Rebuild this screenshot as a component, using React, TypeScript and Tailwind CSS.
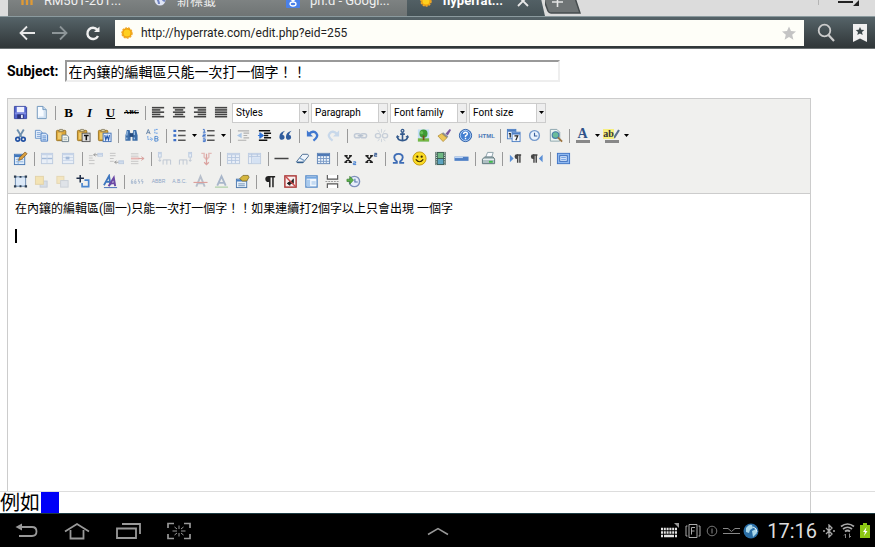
import React from "react";

type Glyph = React.ReactNode;

const NAVY = "#2f5c9e";

const clipboard = (
  <>
    <rect x="1.5" y="2.5" width="10" height="11" rx="1" fill="#d9a437" stroke="#9a7424" />
    <path d="M4 3.5 5 1.5h3l1 2z" fill="#f3e7b5" stroke="#77705a" strokeWidth="0.8" />
    <path d="M3 5h4v7H3z" fill="#f0cb6b" />
  </>
);

const lines = (rows: [number, number][]) => (
  <>
    {rows.map(([x, w], i) => (
      <rect key={i} x={x} y={2 + i * 2.4} width={w} height="1.7" fill="#444" />
    ))}
  </>
);

const smallTable = (x: number, y: number, w: number, h: number) => (
  <>
    <rect x={x} y={y} width={w} height={h} fill="#e9eff7" stroke="#bccade" />
    <rect x={x} y={y} width={w} height="2" fill="#c6d4e8" />
  </>
);

const glyphs: Record<string, Glyph> = {
  Save: (
    <>
      <path d="M1.500 1.500h12l1 1v12h-13z" fill="#5263cf" stroke="#3a47a0" />
      <rect x="4" y="2" width="8" height="6" fill="#eef1ff" />
      <path d="M2 8h12v2H2z" fill="#7e8be2" />
      <rect x="4.500" y="10" width="7" height="4.500" fill="#2c3479" />
      <rect x="8.500" y="10.500" width="2" height="3.500" fill="#e4e7fa" />
    </>
  ),
  "New document": (
    <>
      <path d="M3.500 1.500h6l3.500 3.500v9.500h-9.500z" fill="#f7fbff" stroke="#6c93bb" />
      <path d="M9.500 1.500v3.500H13" fill="#c8dcf0" stroke="#6c93bb" />
      <path d="M11 6v7H5" fill="none" stroke="#d2e2f3" strokeWidth="1.500" />
    </>
  ),
  "Align left": lines([[1, 13], [1, 9], [1, 13], [1, 9], [1, 13]]),
  "Align center": lines([[1, 13], [3, 9], [1, 13], [3, 9], [1, 13]]),
  "Align right": lines([[1, 13], [5, 9], [1, 13], [5, 9], [1, 13]]),
  "Align full": lines([[1, 13], [1, 13], [1, 13], [1, 13], [1, 13]]),
  Cut: (
    <>
      <path d="M4.500 1.500 9.500 10M11.500 1.500 6.500 10" stroke="#6d8fae" strokeWidth="2" fill="none" />
      <circle cx="5" cy="12" r="2" fill="none" stroke="#2352a4" strokeWidth="1.800" />
      <circle cx="11" cy="12" r="2" fill="none" stroke="#2352a4" strokeWidth="1.800" />
    </>
  ),
  Copy: (
    <>
      <path d="M1.500 2.500h5l2 2v6.500h-7z" fill="#e8f1fc" stroke="#6c95c9" />
      <path d="M3 5h4M3 7h4M3 9h4" stroke="#7fa4d6" />
      <path d="M7.500 5.500h5l2 2v6.500h-7z" fill="#dbe9fb" stroke="#4a7cc0" />
      <path d="M9 8.500h4M9 10.500h4M9 12.500h4" stroke="#5b8bcc" />
    </>
  ),
  Paste: (
    <>
      {clipboard}
      <path d="M7.500 7.500h5l2 2v5h-7z" fill="#f5f8f0" stroke="#6b7d8c" />
      <path d="M9 10.500h4M9 12.500h4" stroke="#9fb0b8" />
    </>
  ),
  "Paste as plain text": (
    <>
      {clipboard}
      <rect x="6.500" y="5.500" width="8.500" height="9" fill="#dcdcdc" stroke="#585858" />
      <path d="M8.500 8h5M11 8v5" stroke="#111" strokeWidth="1.600" />
    </>
  ),
  "Paste from Word": (
    <>
      {clipboard}
      <rect x="6.500" y="5.500" width="8.500" height="9" fill="#dfeafb" stroke="#4775b7" />
      <path d="m8.300 7.500 1 5 1.500-4 1.500 4 1-5" fill="none" stroke="#2458ae" strokeWidth="1.200" />
    </>
  ),
  Find: (
    <>
      <path d="M3 2h3l1 5v6.500H1.500V8zM13 2h-3L9 7v6.500h5.500V8z" fill="#3c6da8" />
      <rect x="6" y="5.500" width="4" height="4" fill="#24497b" />
      <path d="M3.500 3.500 3 8M11 3.500v4M3 10v2M11 10v2" stroke="#a9cbed" strokeWidth="1.200" />
    </>
  ),
  Replace: (
    <>
      <path d="M1.500 6.500 3.500 1.500l2 5M2.300 5h2.500" stroke="#6784a6" fill="none" />
      <path d="M10.500 9v5h2q1.500 0 1.500-1.300t-1.500-1.300h-2M12.500 11.400q1.300 0 1.300-1.200T12.500 9h-2" stroke="#4b86d0" fill="none" />
      <path d="M13.500 1.500h-3v4h3M3 8.500v3.500h5M6 10l2 2-2 2" stroke="#5f9be6" fill="none" strokeDasharray="2 0.700" />
    </>
  ),
  "Bulleted list": (
    <>
      <path d="M1.500 3h3M1.500 8h3M1.500 13h3" stroke="#3b6fc9" strokeWidth="2.500" />
      <path d="M6.500 3h8M6.500 8h8M6.500 13h8" stroke="#555" strokeWidth="1.500" />
    </>
  ),
  "Numbered list": (
    <>
      <path d="M2 1.500h1.500v3M2 4.500h3M2 6.500h2.500v1.500H2v1.500h3M2 11.500h2.500v3H2M2 13h2.500" fill="none" stroke="#3b6fc9" />
      <path d="M6.500 3h8M6.500 8h8M6.500 13h8" stroke="#555" strokeWidth="1.500" />
    </>
  ),
  Outdent: (
    <>
      <path d="M2 3h12M8 5.500h6M8 8h4M8 10.500h6M2 13h9" stroke="#b0b0b0" strokeWidth="1.200" />
      <path d="M6 5v6L1 8z" fill="#aac6e6" />
    </>
  ),
  Indent: (
    <>
      <path d="M2 3h12M7.500 5.500H15M7.500 8H12M7.500 10.500H15M2 13h9" stroke="#111" strokeWidth="1.600" />
      <path d="M1 8h3M3 5v6l4-3z" fill="#2f72d6" stroke="#2f72d6" />
    </>
  ),
  "Block quote": (
    <path
      d="M7.500 3Q1.500 4.500 1.500 9.500q0 3 2.600 3Q7 12.500 7 9.900T4.700 7.500Q5 5 7.500 3zM14.500 3q-6 1.500-6 6.500 0 3 2.600 3Q14 12.500 14 9.900T11.700 7.500Q12 5 14.500 3z"
      fill={NAVY}
    />
  ),
  Undo: (
    <>
      <path d="M4 6.500Q9 2 12 5.500T9 13.500" stroke="#4178cf" strokeWidth="2.500" fill="none" />
      <path d="M2 2.500v6.500h6.500z" fill="#4178cf" />
    </>
  ),
  Redo: (
    <>
      <path d="M12 6.500Q7 2 4 5.500T7 13.500" stroke="#c8d8ea" strokeWidth="2.500" fill="none" />
      <path d="M14 2.500v6.500H7.500z" fill="#c8d8ea" />
    </>
  ),
  Link: (
    <>
      <rect x="1.500" y="6" width="6.500" height="4.500" rx="2.200" fill="none" stroke="#c1cad6" strokeWidth="1.600" />
      <rect x="8" y="6" width="6.500" height="4.500" rx="2.200" fill="none" stroke="#c1cad6" strokeWidth="1.600" />
      <path d="M5 8.300h6" stroke="#b0bccb" strokeWidth="1.300" />
    </>
  ),
  Unlink: (
    <>
      <rect x="1.500" y="6" width="5.500" height="4.500" rx="2.200" fill="none" stroke="#c6ced8" strokeWidth="1.500" />
      <rect x="9" y="6" width="5.500" height="4.500" rx="2.200" fill="none" stroke="#c6ced8" strokeWidth="1.500" />
      <path d="M8 1v4M4 2l2 3M12 2l-2 3M8 11.500v3.500M4 14l2-2.500M12 14l-2-2.500" stroke="#ccd3db" />
    </>
  ),
  Anchor: (
    <>
      <circle cx="8" cy="3" r="1.500" fill="none" stroke="#33598c" strokeWidth="1.300" />
      <path d="M8 4.500V13M5.500 6.500h5M2.500 9q.5 4.500 5.500 4.500T13.500 9" stroke="#33598c" strokeWidth="1.700" fill="none" />
      <path d="M1 10.500 2.300 7.500l2.700 2zM15 10.500l-1.300-3-2.700 2z" fill="#33598c" />
    </>
  ),
  Image: (
    <>
      <rect x="2" y="1.500" width="12" height="13" fill="#c3dff5" />
      <path d="M2 11h12v3.500H2z" fill="#75b843" />
      <circle cx="8" cy="6" r="4.300" fill="#3e9a35" />
      <circle cx="6" cy="5" r="1.700" fill="#69c057" />
      <path d="M7.200 8h1.800v5H7.200z" fill="#7a4b20" />
    </>
  ),
  Cleanup: (
    <>
      <path d="m9 6 4.500-5 1.500 1-3.500 6z" fill="#7a5aa0" />
      <path d="m6.500 4.500 5.500 4.500-1.500 2L5 6z" fill="#8b8f97" />
      <path d="M5 6 1 8.500l5.500 6 4-4z" fill="#ecc659" stroke="#a88228" strokeWidth="0.700" />
    </>
  ),
  Help: (
    <>
      <circle cx="8" cy="8" r="6.500" fill="#4480d2" stroke="#285ba5" />
      <circle cx="8" cy="8" r="5.500" fill="none" stroke="#c8dffa" strokeWidth="0.800" />
      <path d="M6 6.500Q6 4.500 8 4.500t2 2Q10 7.500 8 8.500v1.200M8 10.500V12" stroke="#fff" strokeWidth="1.500" fill="none" />
    </>
  ),
  "Insert date": (
    <>
      <rect x="1.500" y="1.500" width="9" height="10" fill="#e6effa" stroke="#4d7fc4" />
      <path d="M1.500 2h9v2h-9z" fill="#4d7fc4" />
      <rect x="6.500" y="4.500" width="8.500" height="10" fill="#f2f6fc" stroke="#4d7fc4" />
      <path d="M6.500 5H15v2H6.500z" fill="#4d7fc4" />
      <path d="M3 6h1.500v4M9 8.500h3.500L10.500 13" fill="none" stroke="#222" strokeWidth="1.300" />
    </>
  ),
  "Insert time": (
    <>
      <circle cx="8" cy="8" r="5.200" fill="#eaf3fd" stroke="#7398cb" strokeWidth="1.500" />
      <path d="M8 5v3.500h3" stroke="#375f9e" strokeWidth="1.200" fill="none" />
    </>
  ),
  Preview: (
    <>
      <path d="M2.500 1.500h7l3 3v9.500h-10z" fill="#edf5f2" stroke="#8aa3ad" />
      <circle cx="8" cy="7.500" r="3.500" fill="#6bbd9a" stroke="#477fa8" strokeWidth="1.300" />
      <path d="m10.500 10 4.500 4.500" stroke="#9c7440" strokeWidth="2" />
    </>
  ),
  "Edit CSS": (
    <>
      <rect x="1.500" y="3.500" width="11" height="11" fill="#e1edfa" stroke="#4778b5" />
      <path d="M1.500 4h11v2.500h-11z" fill="#3f76bd" />
      <path d="M3 9h8M3 11.500h8M5.500 7v7" stroke="#8ab0dd" />
      <path d="m6 10 1-3 6-6 2 2-6 6z" fill="#dba13f" stroke="#805a28" strokeWidth="0.800" />
    </>
  ),
  "Row properties": (
    <>
      {smallTable(1.5, 2.5, 12, 11)}
      <path d="M2 8h11" stroke="#a3b9d8" strokeWidth="1.500" />
      <path d="M7.500 3v10" stroke="#c9d6e9" />
    </>
  ),
  "Cell properties": (
    <>
      {smallTable(1.5, 2.5, 12, 11)}
      <path d="M2 7h11M2 10h11" stroke="#c9d6e9" />
      <rect x="5" y="6" width="4" height="3" fill="#a3b9d8" />
    </>
  ),
  "Insert row before": (
    <>
      <path d="M1 5h4M1 10h6M1 13.500h6M1 7.500h4" stroke="#c2c2c2" />
      {smallTable(10.5, 2.5, 5, 3)}
      <path d="M10 4H6M8 2.500 6 4l2 1.500" stroke="#9a9a9a" fill="none" />
    </>
  ),
  "Insert row after": (
    <>
      <path d="M1 2.500h6M1 5h6M1 8h4M1 11h4" stroke="#c2c2c2" />
      {smallTable(10.5, 10.5, 5, 3)}
      <path d="M10 12H6M8 10.500 6 12l2 1.500" stroke="#9a9a9a" fill="none" />
    </>
  ),
  "Delete row": (
    <>
      <path d="M1 3h8M1 5.500h8M1 11h8M1 13.500h8" stroke="#c4c4c4" />
      <path d="M1 8h9" stroke="#e5b3b0" strokeWidth="2" />
      <path d="M9 8h6M12 6l3 2-3 2" stroke="#d9a09c" fill="none" />
    </>
  ),
  "Insert column before": (
    <>
      {smallTable(1.5, 1.5, 3, 5)}
      <path d="M3 7v4M1.500 9.500 3 11l1.500-1.500M6.500 14.500V9.500h8v5M10.500 9.500v5" stroke="#bcc5d2" fill="none" />
    </>
  ),
  "Insert column after": (
    <>
      {smallTable(11.5, 1.5, 3, 5)}
      <path d="M13 7v4M11.500 9.500 13 11l1.500-1.500M1.500 14.500V9.500h8v5M5.500 9.500v5" stroke="#bcc5d2" fill="none" />
    </>
  ),
  "Delete column": (
    <>
      <path d="M2.500 2.500h3v4L8 9l2.500-2.500v-4h3" stroke="#e3bbb8" strokeWidth="1.500" fill="none" />
      <path d="M8 3v11M5.500 12 8 14.500l2.500-2.500" stroke="#dba29f" strokeWidth="1.300" fill="none" />
    </>
  ),
  "Split cells": (
    <>
      {smallTable(1.5, 2.5, 13, 11)}
      <path d="M2 7h12M2 10h12M6 4v9M10 4v9" stroke="#b4c6e0" />
    </>
  ),
  "Merge cells": (
    <>
      {smallTable(1.5, 2.5, 13, 11)}
      <path d="M2 6h12M5 3v10M11 3v3" stroke="#b4c6e0" />
      <rect x="6" y="7" width="8" height="6" fill="#d5e2f3" />
    </>
  ),
  "Horizontal rule": <path d="M.5 8h15" stroke="#444" strokeWidth="1.600" />,
  "Remove formatting": (
    <>
      <path d="M1.500 11.500 8 3.500h5.500q1.500 1 .5 2.500L8.500 12.500h-6z" fill="#eef4fb" stroke="#45698f" />
      <path d="m5 7.500 5.500 3" stroke="#7da1c6" strokeWidth="1.300" />
      <path d="M2 12h7" stroke="#315d8c" strokeWidth="1.500" />
    </>
  ),
  "Toggle guidelines": (
    <>
      <rect x="1.500" y="2.500" width="13" height="11" fill="#edf4fc" stroke="#6386b5" />
      <path d="M1.500 3h13v2.500h-13z" fill="#4e79b5" />
      <path d="M2 8h12M2 11h12M5 5v8M8 5v8M11 5v8" stroke="#7b9bc6" />
    </>
  ),
  Subscript: (
    <>
      <path d="m2.500 5 6 7M8.500 5l-6 7M1.500 5H5M6.500 5h3M1.500 12h3M6 12h3.500" stroke="#222" strokeWidth="1.500" />
      <path d="M11 11.500h2.500V13H11v1.500h3" stroke="#3978cf" fill="none" />
    </>
  ),
  Superscript: (
    <>
      <path d="m2.500 5 6 7M8.500 5l-6 7M1.500 5H5M6.500 5h3M1.500 12h3M6 12h3.500" stroke="#222" strokeWidth="1.500" />
      <path d="M11 2.500h2.500V4H11v1.500h3" stroke="#224b89" fill="none" />
    </>
  ),
  "Special character": (
    <path
      d="M2 12.700h4.200v-1.500Q3.500 9 3.500 6.800 3.500 3 8 3t4.500 3.800q0 2.200-2.700 4.400v1.500H14"
      stroke="#3d6cb5"
      strokeWidth="2"
      fill="none"
    />
  ),
  Emoticons: (
    <>
      <circle cx="8" cy="8" r="7" fill="#fbdc25" stroke="#c49a10" />
      <circle cx="5.700" cy="6" r="1.200" fill="#3a2a00" />
      <circle cx="10.300" cy="6" r="1.200" fill="#3a2a00" />
      <path d="M4 9q4 5 8 0" stroke="#3a2a00" fill="none" strokeWidth="1.200" />
    </>
  ),
  Media: (
    <>
      <rect x="2.500" y="1" width="11" height="14" fill="#3c5a52" />
      <rect x="5" y="2" width="6" height="5.500" fill="#6fb883" />
      <rect x="5" y="8.500" width="6" height="5.500" fill="#5da4c0" />
      <path d="M3.700 1.500v13M12.300 1.500v13" stroke="#dce8e0" strokeDasharray="1.200 1.200" />
    </>
  ),
  "Advanced rule": (
    <>
      <rect x="0.500" y="6" width="15" height="4.500" fill="#4f80c6" />
      <path d="M.5 6.800h9" stroke="#c0d7f5" strokeWidth="1.500" />
    </>
  ),
  Print: (
    <>
      <path d="m5 6.500 2-5h6l-1.500 5z" fill="#fafcff" stroke="#8aa0a8" />
      <path d="m1.500 8.500 2.500-2h9l1.500 2v5h-13z" fill="#aebfc2" stroke="#5c7379" />
      <path d="M2 9h12" stroke="#eff4f4" />
      <rect x="8.500" y="10.500" width="4" height="2" fill="#3dbb48" />
    </>
  ),
  "Left to right": (
    <>
      <path d="m2 4 4 4-4 4z" fill="#5a8fd6" />
      <path d="M14 4.200H9.500M10.300 4v8.500M12.700 4v8.500" stroke="#444" strokeWidth="1.500" fill="none" />
      <path d="M10.500 3.500H9.500q-2.500 0-2.500 2.500t2.500 2.500h1z" fill="#444" />
    </>
  ),
  "Right to left": (
    <>
      <path d="m14.500 4-4 4 4 4z" fill="#5a8fd6" />
      <path d="M9 4.200H4.500M5.300 4v8.500M7.700 4v8.500" stroke="#444" strokeWidth="1.500" fill="none" />
      <path d="M5.500 3.500h-1Q2 3.500 2 6t2.500 2.500h1z" fill="#444" />
    </>
  ),
  Fullscreen: (
    <>
      <rect x="1.500" y="2.500" width="13" height="11" fill="#8fb9f1" stroke="#3f74c4" />
      <rect x="4" y="5" width="8" height="6" fill="#dceafd" stroke="#3568b8" />
      <path d="M5.500 7h5M5.500 9h5" stroke="#6e9ce0" />
    </>
  ),
  "Insert layer": (
    <>
      <rect x="2.500" y="3" width="11" height="10" fill="#dce9f8" stroke="#6787ae" />
      <path d="M1 1.500h2.500V4H1zM12.500 1.500H15V4h-2.500zM1 12h2.500v2.500H1zM12.500 12H15v2.500h-2.500zM7 2h2v2H7zM7 12h2v2H7z" fill="#2d3d50" />
    </>
  ),
  "Move forward": (
    <>
      <rect x="6.500" y="7.500" width="7.500" height="6.500" fill="#d6dde6" stroke="#c4ccd6" />
      <rect x="1.500" y="2.500" width="8.500" height="8.500" fill="#f3e3b3" stroke="#e2d2a8" />
    </>
  ),
  "Move backward": (
    <>
      <rect x="2" y="2.500" width="7.500" height="7.500" fill="#f3e5bf" stroke="#e4d6b2" />
      <rect x="6" y="7" width="8" height="7" fill="#dfe3e8" stroke="#cbd0d7" />
    </>
  ),
  "Absolute position": (
    <>
      <path d="M4.500 1v8M.5 4.500h8" stroke="#1f2d47" strokeWidth="1.600" />
      <path d="M9 6.500h4.500v7H6.500V9.500" fill="none" stroke="#4b86cf" strokeWidth="1.800" />
    </>
  ),
  "Edit styles": (
    <>
      <path d="m1 12 5.500-10L8 12M3.500 8.500h4" stroke="#3e76be" strokeWidth="1.900" fill="none" />
      <path d="m6 13 5.500-9L13 13M8.500 10h4" stroke="#6b48a4" strokeWidth="2.100" fill="none" />
      <path d="M1 14.500h14" stroke="#3f66b4" />
    </>
  ),
  Citation: (
    <path
      d="M2.500 5.500 1.500 7.500V10H3V8H2M6 5.500 5 7.500V10h1.500V8h-1M10 6h-1v2h1.500L9.500 10.500M13.500 6h-1v2H14l-1 2.500"
      stroke="#a9bad0"
      fill="none"
    />
  ),
  Deletion: (
    <>
      <path d="M3.500 13.500 8 2.500l4.500 11M5 10h6" stroke="#b8bfcb" strokeWidth="2" fill="none" />
      <path d="M.5 9h15" stroke="#dc9f9b" strokeWidth="1.200" />
    </>
  ),
  Insertion: (
    <>
      <path d="M3.500 12.500 8 2.500l4.500 10M5 9.500h6" stroke="#a8b6ca" strokeWidth="2" fill="none" />
      <path d="M1 14h14" stroke="#aed0a7" strokeWidth="1.300" />
    </>
  ),
  Attributes: (
    <>
      <rect x="1.500" y="5.500" width="11" height="9" fill="#e8f1fa" stroke="#4c77ab" />
      <path d="M1.500 6h11v2h-11z" fill="#4c82c4" />
      <path d="M3.500 10.500h7M3.500 12.500h7" stroke="#7293b5" />
      <path d="m5 5 3.500-3.500H14l1 2-2.500 4H8z" fill="#d6b73e" stroke="#7a6420" strokeWidth="0.800" />
    </>
  ),
  "Visual characters": (
    <>
      <path d="M14 2.800H7M8.300 2.800V14M11.700 2.800V14" stroke="#222" strokeWidth="1.600" fill="none" />
      <path d="M8.500 2H7Q3.500 2 3.500 5.300T7 8.600h1.500z" fill="#222" />
    </>
  ),
  "Non-breaking space": (
    <>
      <rect x="2" y="2" width="12" height="12" fill="#f9eeee" stroke="#a93434" strokeWidth="1.500" />
      <path d="M11 5v5H6M7.500 8v4L4.500 10z" stroke="#222" fill="#222" />
      <path d="m3 3 10 10" stroke="#cc4848" strokeWidth="1.500" />
    </>
  ),
  Template: (
    <>
      <rect x="2" y="2" width="12" height="12" fill="#f1f7fd" stroke="#4f86c6" strokeWidth="1.300" />
      <path d="M2 3h12v2H2z" fill="#76a8e0" />
      <rect x="3" y="6" width="3.500" height="7" fill="#a9cbef" />
      <rect x="8" y="7.500" width="4.500" height="4" fill="#c4daf2" />
    </>
  ),
  "Page break": (
    <>
      <path d="M2.500 1v4.500h11V1M2.500 15v-4.500h11V15" fill="#fff" stroke="#555" strokeWidth="1.200" />
      <path d="M.5 8h15" stroke="#999" strokeDasharray="2 1" />
    </>
  ),
  "Restore draft": (
    <>
      <circle cx="9" cy="8" r="5.500" fill="#e7eefb" stroke="#7f90bb" strokeWidth="1.500" />
      <path d="M9.500 5v3.500h3" stroke="#5675ab" fill="none" strokeWidth="1.200" />
      <path d="M1 5.500h3V2.500l4 4-4 4.300V8H1z" fill="#5cb24b" stroke="#357b2b" strokeWidth="0.700" />
    </>
  ),
};

const textGlyphs: Record<string, { label: string; cls: string }> = {
  Bold: { label: "B", cls: "text-[13px] font-black text-black" },
  Italic: { label: "I", cls: "text-[13px] font-black italic text-black" },
  Underline: { label: "U", cls: "text-[13px] font-black text-black underline" },
  Strikethrough: { label: "ABC", cls: "text-[7px] font-bold text-black line-through" },
  "HTML source": { label: "HTML", cls: "font-['Liberation_Sans'] text-[6px] font-bold text-[#4a78b8]" },
  Abbreviation: { label: "ABBR", cls: "font-['Liberation_Sans'] text-[5px] text-[#8da5c6]" },
  Acronym: { label: "A.B.C.", cls: "font-['Liberation_Sans'] text-[5px] text-[#8da5c6]" },
};

function ToolButton({ name }: { name: string }) {
  const t = textGlyphs[name];
  return (
    <button
      type="button"
      aria-label={name}
      title={name}
      className="flex h-5 w-[21px] items-center justify-center font-['Liberation_Serif',serif] leading-none"
    >
      {t ? (
        <span className={t.cls}>{t.label}</span>
      ) : (
        <svg viewBox="0 0 16 16" className="size-[15px]">
          {glyphs[name]}
        </svg>
      )}
    </button>
  );
}

function ColorButton({ name }: { name: string }) {
  return (
    <button
      type="button"
      aria-label={name}
      title={name}
      className="flex h-5 w-[21px] flex-col items-center justify-center font-['Liberation_Serif',serif] leading-none"
    >
      {name === "Text color" ? (
        <span className="text-sm leading-3 font-bold text-[#2f5288]">A</span>
      ) : (
        <span className="flex h-3 items-center text-[10px] font-bold text-[#333]">
          <span className="bg-[#f6ee7d]">ab</span>
          <svg viewBox="0 0 6 10" className="h-[10px] w-[6px]">
            <path d="M0 9 5 1" stroke="#59708c" strokeWidth="2" />
          </svg>
        </span>
      )}
      <span className="h-[3px] w-[14px] bg-[#888]" />
    </button>
  );
}

function MenuArrow({ name }: { name: string }) {
  return (
    <button type="button" aria-label={name} className="flex h-5 w-2 items-center justify-center">
      <svg viewBox="0 0 5 3" className="h-[3px] w-[5px]">
        <path d="M0 0h5L2.500 3z" fill="#000" />
      </svg>
    </button>
  );
}

function Separator() {
  return (
    <span className="flex w-[6px] justify-center">
      <span className="h-[14px] w-px bg-[#999]" />
    </span>
  );
}

function Picker({ label }: { label: string }) {
  return (
    <label className="relative block h-5 w-[77px]">
      <select
        aria-label={label}
        className="h-full w-full appearance-none rounded-none border border-[#ccc] bg-white pl-[3px] align-top text-[10px] leading-4 text-black"
      >
        <option>{label}</option>
      </select>
      <span className="pointer-events-none absolute inset-y-0 right-0 flex w-[10px] items-center justify-center border border-[#ccc] bg-[#eee]">
        <svg viewBox="0 0 5 3" className="h-[3px] w-[5px] shrink-0">
          <path d="M0 0h5L2.500 3z" fill="#000" />
        </svg>
      </span>
    </label>
  );
}

const rows: string[][] = [
  ["Save", "New document", "|", "Bold", "Italic", "Underline", "Strikethrough", "|", "Align left", "Align center", "Align right", "Align full"],
  [
    "Cut", "Copy", "Paste", "Paste as plain text", "Paste from Word", "|", "Find", "Replace", "|",
    "Bulleted list", "v", "Numbered list", "v", "|", "Outdent", "Indent", "Block quote", "|", "Undo", "Redo", "|",
    "Link", "Unlink", "Anchor", "Image", "Cleanup", "Help", "HTML source", "|",
    "Insert date", "Insert time", "Preview", "|", "Text color", "v", "Highlight color", "v",
  ],
  [
    "Edit CSS", "|", "Row properties", "Cell properties", "|", "Insert row before", "Insert row after", "Delete row", "|",
    "Insert column before", "Insert column after", "Delete column", "|", "Split cells", "Merge cells", "|",
    "Horizontal rule", "Remove formatting", "Toggle guidelines", "|", "Subscript", "Superscript", "|",
    "Special character", "Emoticons", "Media", "Advanced rule", "|", "Print", "|", "Left to right", "Right to left", "|", "Fullscreen",
  ],
  [
    "Insert layer", "Move forward", "Move backward", "Absolute position", "|", "Edit styles", "|",
    "Citation", "Abbreviation", "Acronym", "Deletion", "Insertion", "Attributes", "|",
    "Visual characters", "Non-breaking space", "Template", "Page break", "Restore draft",
  ],
];

function ToolRow({ items, children }: { items: string[]; children?: React.ReactNode }) {
  return (
    <div className="flex h-[23px] items-center pl-[2px]">
      {items.map((name, i) => {
        if (name === "|") return <Separator key={i} />;
        if (name === "v") return <MenuArrow key={i} name={`${items[i - 1]} options`} />;
        if (name.endsWith(" color")) return <ColorButton key={i} name={name} />;
        return <ToolButton key={i} name={name} />;
      })}
      {children}
    </div>
  );
}

function Sun() {
  return (
    <svg viewBox="0 0 14 14" className="size-[14px] shrink-0">
      <circle cx="7" cy="7" r="5" fill="#ee9c08" stroke="#f0a828" strokeDasharray="2 1" strokeWidth="1.500" />
      <circle cx="7" cy="7" r="3.500" fill="#ffcf1e" />
    </svg>
  );
}

function Tab({ icon, title, active }: { icon: React.ReactNode; title: string; active?: boolean }) {
  return (
    <div
      className={
        active
          ? "flex h-full w-[138px] items-center gap-[10px] bg-linear-to-b from-[#5d6b71] to-[#465357] pl-3 font-bold text-white [clip-path:polygon(0_0,95%_0,100%_100%,0_100%)]"
          : "flex h-full w-[133px] items-center gap-[10px] bg-linear-to-b from-[#8b8f8f] to-[#6f7474] pl-3 text-[#f0f0f0]"
      }
    >
      {icon}
      <span className="whitespace-nowrap">{title}</span>
      {active && (
        <button type="button" aria-label="Close tab" className="ml-1">
          <svg viewBox="0 0 12 12" className="size-3">
            <path d="m1 1 10 10M11 1 1 11" stroke="#e8e8e8" strokeWidth="1.800" />
          </svg>
        </button>
      )}
    </div>
  );
}

function TabStrip() {
  return (
    <div className="flex h-4 shrink-0 flex-col justify-end overflow-hidden bg-[#dcdcdc]">
      <div className="flex h-[30px] shrink-0 items-center pl-2 text-[13px]">
        <Tab
          title="RM501-201..."
          icon={
            <svg viewBox="0 0 14 14" className="size-[14px] shrink-0">
              <path d="M2.500 11V4M7 11V4M11.500 11V4M1 4h11" stroke="#e09a35" strokeWidth="2.300" fill="none" />
            </svg>
          }
        />
        <Tab
          title="新標籤"
          icon={
            <svg viewBox="0 0 14 14" className="size-[14px] shrink-0">
              <circle cx="7" cy="6" r="5.500" fill="#dfe5f5" />
              <path d="M3 3q3 4 3 7M9 3q0 3 3 4" stroke="#7184c2" strokeWidth="2" fill="none" />
            </svg>
          }
        />
        <Tab
          title="ph.d - Googl..."
          icon={
            <svg viewBox="0 0 14 14" className="size-[14px] shrink-0">
              <rect width="14" height="14" rx="1" fill="#4a80e8" />
              <circle cx="7" cy="4.500" r="2" fill="none" stroke="#fff" strokeWidth="1.300" />
              <ellipse cx="7" cy="10" rx="3" ry="2" fill="none" stroke="#fff" strokeWidth="1.300" />
              <path d="M7 6.500V8M8 2.500h3" stroke="#fff" strokeWidth="1.200" />
            </svg>
          }
        />
        <Tab title="hyperrat..." icon={<Sun />} active />
        <button type="button" aria-label="New tab" className="h-full w-[36px]">
          <svg viewBox="0 0 36 30" className="h-[30px] w-[36px]">
            <path d="M-6 0h32l9 27H6q-2 0-3-2z" fill="#6f7475" stroke="#454b4d" strokeWidth="1.500" />
            <path d="M7 16h11M12.500 10v11" stroke="#e5e5e5" strokeWidth="1.600" />
          </svg>
        </button>
        <div className="flex h-full flex-1 items-center justify-end pr-4">
          <span className="h-2 w-px bg-[#b5b5b5]" />
          <svg viewBox="0 0 22 12" className="ml-[18px] h-3 w-[22px]">
            <path d="M1 6h15v2H1zM22 5v6h-6z" fill="#222" />
          </svg>
        </div>
      </div>
    </div>
  );
}

function AddressBar() {
  return (
    <div className="flex h-[33px] shrink-0 items-center border-t border-b border-t-[#8b9a9e] border-b-[#6b7173] bg-linear-to-b from-[#566469] to-[#303638] pr-2 pl-[18px]">
      <button type="button" aria-label="Back" className="w-[33px]">
        <svg viewBox="0 0 18 16" className="h-4 w-[18px]">
          <path d="M17 8H3M9 1.500 2.500 8 9 14.500" stroke="#e8e8e8" strokeWidth="1.800" fill="none" />
        </svg>
      </button>
      <button type="button" aria-label="Forward" className="w-[33px]">
        <svg viewBox="0 0 18 16" className="h-4 w-[18px]">
          <path d="M1 8h14M9 1.500 15.500 8 9 14.500" stroke="#8d9598" strokeWidth="1.800" fill="none" />
        </svg>
      </button>
      <button type="button" aria-label="Reload" className="w-[31px]">
        <svg viewBox="0 0 18 16" className="h-4 w-[18px]">
          <path d="M13.300 4.800A5.600 5.600 0 1 0 14 11" stroke="#f0f0f0" strokeWidth="2.400" fill="none" />
          <path d="M15.500 1.500V7H10z" fill="#f0f0f0" />
        </svg>
      </button>
      <div className="flex h-[26px] min-w-0 flex-1 items-center bg-[#fefef8] px-[5px]">
        <Sun />
        <input
          aria-label="Address"
          type="text"
          defaultValue="http://hyperrate.com/edit.php?eid=255"
          className="min-w-0 flex-1 bg-transparent px-[7px] text-xs text-[#222] outline-none"
        />
        <button type="button" aria-label="Bookmark this page" className="mr-[2px]">
          <svg viewBox="0 0 16 16" className="size-4">
            <path d="m8 1.500 2 4.600 5 .4-3.800 3.300 1.200 4.900L8 12.100l-4.400 2.600 1.200-4.900L1 6.500l5-.4z" fill="#c4c4c4" />
          </svg>
        </button>
      </div>
      <button type="button" aria-label="Search" className="ml-[13px] w-[36px]">
        <svg viewBox="0 0 18 20" className="h-5 w-[18px]">
          <circle cx="7.500" cy="7.500" r="5.800" stroke="#ccc" strokeWidth="1.800" fill="none" />
          <path d="m11.500 12 5.500 6" stroke="#ccc" strokeWidth="2.200" />
        </svg>
      </button>
      <button type="button" aria-label="Bookmarks">
        <svg viewBox="0 0 14 18" className="h-[18px] w-[14px]">
          <path d="M0 0h14v18l-7-3.500L0 18z" fill="#f0f0f0" />
          <path d="m7 3 1.300 2.800 3 .3-2.300 2 .7 3L7 9.500l-2.700 1.600.7-3-2.300-2 3-.3z" fill="#3b4649" />
        </svg>
      </button>
    </div>
  );
}

function NavBar() {
  return (
    <nav className="grid h-[34px] shrink-0 grid-cols-[1fr_auto_1fr] items-center border-t border-[#1d3b42] bg-black">
      <div className="flex items-center gap-[26px] pl-[14px]">
        <button type="button" aria-label="Back key">
          <svg viewBox="0 0 24 18" className="h-[18px] w-6">
            <path d="M6 5h12q4.500 0 4.500 4.500T18 14H5" stroke="#999" strokeWidth="1.800" fill="none" />
            <path d="M1.500 5 8 1.500v7z" fill="#999" />
          </svg>
        </button>
        <button type="button" aria-label="Home key">
          <svg viewBox="0 0 26 18" className="h-[18px] w-[26px]">
            <path d="M1 9.500 13 2l12 7.500M6.500 8v8.500h13V8" stroke="#999" strokeWidth="1.800" fill="none" />
          </svg>
        </button>
        <button type="button" aria-label="Recent apps">
          <svg viewBox="0 0 25 18" className="h-[18px] w-[25px]">
            <path d="M1 6.500h19v9.500H1zM6 2h18v10" stroke="#999" strokeWidth="1.800" fill="none" />
          </svg>
        </button>
        <button type="button" aria-label="Screen capture">
          <svg viewBox="0 0 24 18" className="h-[18px] w-6">
            <path
              d="M1 6V1.500h6M17 1.500h6V6M23 12v4.500h-6M7 16.500H1V12"
              stroke="#999"
              strokeWidth="1.700"
              fill="none"
            />
            <path d="M12 3.500v3.500M12 11v3.500M5.500 9H10M14 9h4.500M7.500 5l2.500 2M16.500 5 14 7M7.500 13l2.500-2M16.500 13 14 11" stroke="#999" />
          </svg>
        </button>
      </div>
      <button type="button" aria-label="Show panel">
        <svg viewBox="0 0 22 10" className="h-[10px] w-[22px]">
          <path d="m1 8.500 10-6 10 6" stroke="#999" strokeWidth="1.500" fill="none" />
        </svg>
      </button>
      <div className="flex items-center justify-end pr-[5px]">
        <svg viewBox="0 0 20 18" className="mr-[6px] h-[18px] w-5">
          <path d="M2 7h16M2 10.500h16M2 14h2M16 14h2" stroke="#e5e5e5" strokeWidth="2.500" strokeDasharray="2 0.800" />
          <path d="M5 14h10" stroke="#e5e5e5" strokeWidth="2.500" />
          <path d="M15 1h5v5z" fill="#999" />
        </svg>
        <svg viewBox="0 0 16 16" className="mr-[5px] size-4">
          <path d="M4 1.500h8v13H4zM2.500 3H1v10h1.500M13.500 3H15v10h-1.500M6.500 11.500v-7H10M6.500 8h3" stroke="#aaa" fill="none" />
        </svg>
        <svg viewBox="0 0 12 12" className="mr-[5px] size-3">
          <circle cx="6" cy="6" r="4.800" stroke="#777" fill="none" />
          <path d="M6 3.500v5" stroke="#888" />
        </svg>
        <svg viewBox="0 0 17 8" className="mr-[3px] h-2 w-[17px]">
          <path d="M0 1.500h5l3.500 3 3.500-3h5M0 6.500h17" stroke="#888" fill="none" />
        </svg>
        <svg viewBox="0 0 16 16" className="mr-2 size-4">
          <circle cx="8" cy="8" r="7.500" fill="#2a6ea6" />
          <path d="M3 5q3-4 6-3l1 3-3 2-1 3-3-1zM9 8l4-2 1 4-4 4z" fill="#a9d7ea" />
          <path d="M10 4q4 1 4 5" stroke="#e8f5fb" fill="none" />
        </svg>
        <time className="mr-[6px] text-xl leading-6 text-[#ddd]">17:16</time>
        <svg viewBox="0 0 12 14" className="mr-[5px] h-[14px] w-3">
          <path d="m3 4 6 6-3 3V1l3 3-6 6M0 7h2M10 7h2" stroke="#aaa" strokeWidth="1.300" fill="none" />
        </svg>
        <svg viewBox="0 0 15 17" className="mr-[5px] h-[17px] w-[15px]">
          <path d="M1 4.500q6.500-5 13 0M3 7q4.500-3.500 9 0M5 9.500q2.500-2 5 0" stroke="#aaa" strokeWidth="1.700" fill="none" />
          <path d="M5.500 16v-4L4 13.500M9.500 11.500v4L11 14" stroke="#888" fill="none" />
        </svg>
        <svg viewBox="0 0 10 15" className="h-[15px] w-[10px]">
          <path d="M3 0h4v2h3v13H0V2h3z" fill="#8cc814" />
          <path d="M6.500 4 3 9h2l-1 4 3.500-5h-2z" fill="#fff" />
        </svg>
      </div>
    </nav>
  );
}

export default function App() {
  return (
    <div className="flex h-screen flex-col overflow-hidden bg-white font-[Roboto,'Noto_Sans_CJK_TC',sans-serif] text-black">
      <TabStrip />
      <AddressBar />
      <main className="flex min-h-0 flex-1 flex-col">
        <div className="flex items-center gap-[6px] pt-[11px] pl-[7px]">
          <label htmlFor="subject" className="text-sm font-bold">
            Subject:
          </label>
          <input
            id="subject"
            type="text"
            defaultValue="在內鑲的編輯區只能一次打一個字！！"
            className="h-[22px] w-[495px] border-2 border-t-[#999] border-r-[#eee] border-b-[#eee] border-l-[#999] pl-[2px] text-sm"
          />
        </div>
        <div className="mt-4 mr-16 ml-[7px] flex min-h-0 flex-1 flex-col border border-b-0 border-[#ccc]">
          <div role="toolbar" aria-label="Formatting" className="border-b border-[#ccc] bg-[#f0f0ee] pt-[2px]">
            <ToolRow items={rows[0]}>
              <div className="flex gap-[2px]">
                <Picker label="Styles" />
                <Picker label="Paragraph" />
                <Picker label="Font family" />
                <Picker label="Font size" />
              </div>
            </ToolRow>
            <ToolRow items={rows[1]} />
            <ToolRow items={rows[2]} />
            <ToolRow items={rows[3]} />
          </div>
          <div role="textbox" aria-label="Message" aria-multiline="true" className="flex-1 px-[7px] pt-[7px] text-xs leading-4">
            <p>在內鑲的編輯區(圖一)只能一次打一個字！！如果連續打2個字以上只會出現 一個字</p>
            <p className="mt-3">
              <span className="block h-[14px] w-[2px] bg-black" />
            </p>
          </div>
        </div>
        <div className="flex h-[22px] shrink-0 border-t border-[#ddd]">
          <div className="mr-16 flex flex-1 items-center gap-px border-r border-[#ccc] text-xl leading-5">
            <span>例如</span>
            <span className="h-full w-[18px] bg-[#0000f8]" />
          </div>
        </div>
      </main>
      <NavBar />
    </div>
  );
}
